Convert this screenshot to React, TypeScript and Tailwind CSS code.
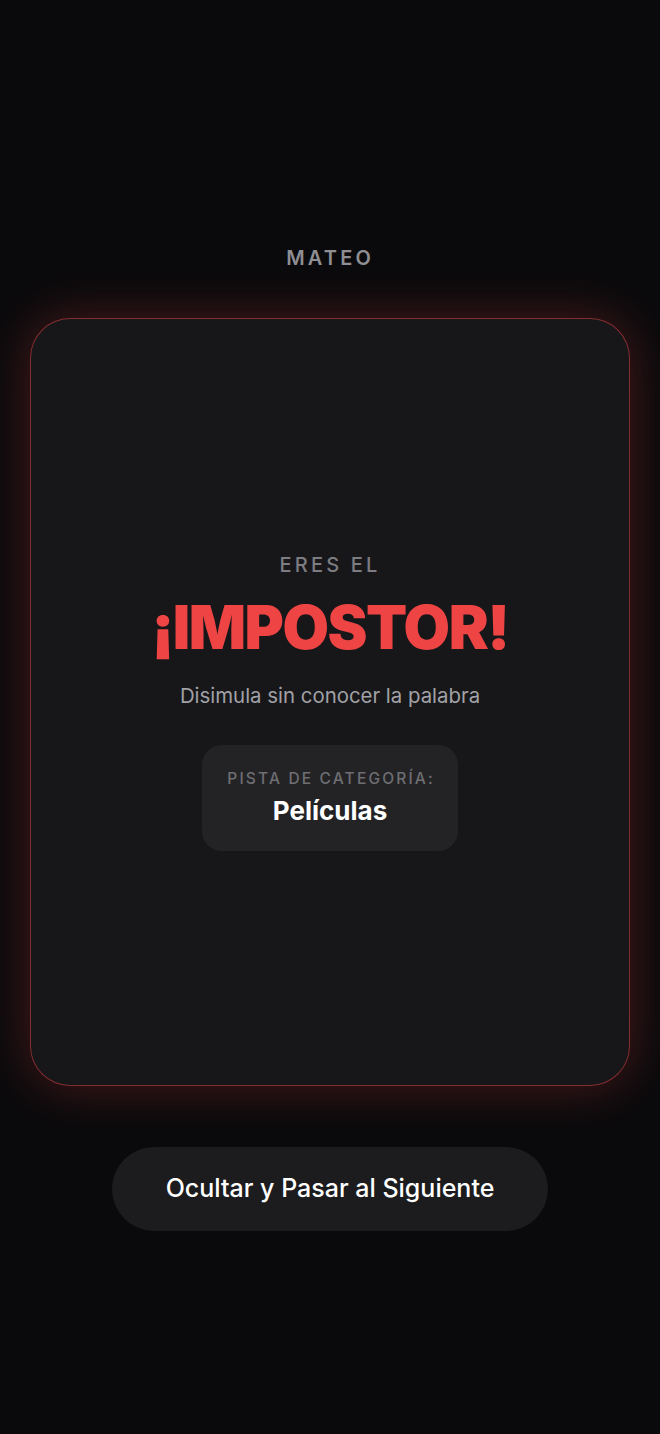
export default function App() {
  return (
    <main
      className="min-h-screen w-full bg-[#0a0a0c] flex flex-col items-center pt-[246px]"
      style={{ fontFamily: 'Inter, "Noto Sans", sans-serif' }}
    >
      <h2 className="text-[20px] leading-[24px] font-semibold tracking-[0.16em] text-[#8e8e93] pl-[0.16em] -ml-[3px]">
        MATEO
      </h2>

      <div className="mt-[48px] w-[600px] h-[768px] rounded-[40px] bg-[#17171a] border border-[#ef4444]/50 shadow-[0_0_50px_rgba(239,68,68,0.28)] flex flex-col items-center justify-center">
        <p className="text-[20px] leading-[24px] font-medium tracking-[0.16em] text-[#7c7c82] pl-[0.16em] -ml-[3px]">
          ERES EL
        </p>
        <h1 className="mt-[18px] text-[60px] leading-[64px] font-black tracking-[-0.025em] text-[#ef4444]">
          ¡IMPOSTOR!
        </h1>
        <p className="mt-[24px] text-[20.4px] leading-[26px] text-[#a1a1a6]">
          Disimula sin conocer la palabra
        </p>
        <div className="mt-[36px] w-[256px] h-[106px] rounded-[20px] bg-[#232326] flex flex-col items-center justify-center">
          <span className="text-[15.5px] leading-[20px] font-medium tracking-[0.14em] text-[#6e6e73] pl-[0.14em]">
            PISTA DE CATEGORÍA:
          </span>
          <span className="mt-[6px] text-[26px] leading-[32px] font-bold text-white">
            Películas
          </span>
        </div>
      </div>

      <button className="mt-[61px] w-[436px] h-[84px] rounded-full bg-[#1c1c1e] text-white text-[25px] font-medium">
        Ocultar y Pasar al Siguiente
      </button>
    </main>
  )
}
